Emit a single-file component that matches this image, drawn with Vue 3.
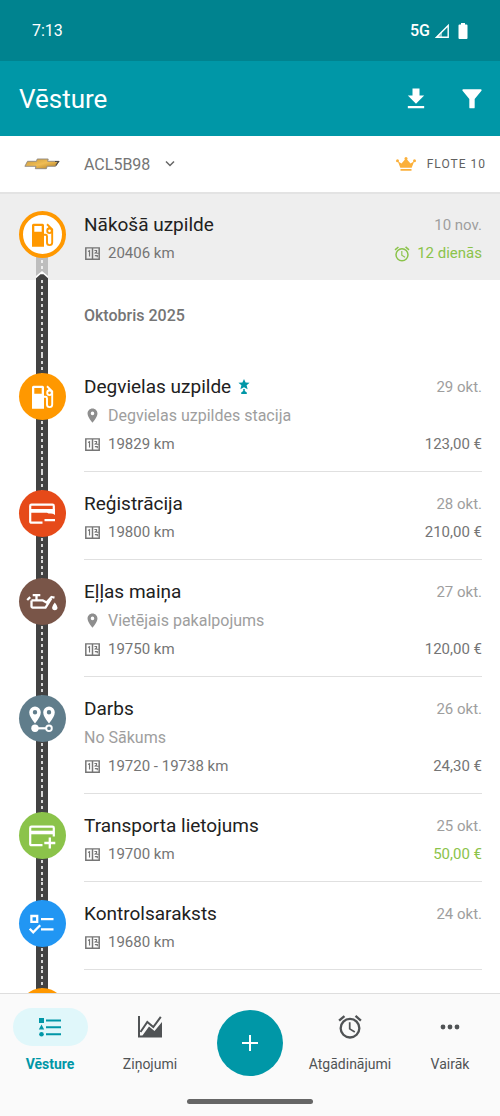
<script setup>
const upcoming = {
  title: 'Nākošā uzpilde',
  date: '10 nov.',
  odometer: '20406 km',
  due: '12 dienās',
}

const entries = [
  { icon: 'fuel', title: 'Degvielas uzpilde', starred: true, date: '29 okt.', place: 'Degvielas uzpildes stacija', odometer: '19829 km', amount: '123,00 €' },
  { icon: 'expense', title: 'Reģistrācija', date: '28 okt.', odometer: '19800 km', amount: '210,00 €' },
  { icon: 'oil', title: 'Eļļas maiņa', date: '27 okt.', place: 'Vietējais pakalpojums', odometer: '19750 km', amount: '120,00 €' },
  { icon: 'route', title: 'Darbs', date: '26 okt.', note: 'No Sākums', odometer: '19720 - 19738 km', amount: '24,30 €' },
  { icon: 'income', title: 'Transporta lietojums', date: '25 okt.', odometer: '19700 km', amount: '50,00 €', positive: true },
  { icon: 'checklist', title: 'Kontrolsaraksts', date: '24 okt.', odometer: '19680 km' },
  { icon: 'fuel' },
]
</script>

<template>
  <div class="app">
    <svg class="defs" width="0" height="0" aria-hidden="true">
      <defs>
        <symbol id="i-odo" viewBox="0 0 16 14">
          <path d="M1.700 1.700h12.600v10.600H1.700zM8 1.700v10.600" fill="none" stroke="currentColor" stroke-width="1.400" />
          <path d="M3.800 5.200l1.400-.8v5.400M9.800 4.200h2v1.300L10 7M14 6.800h-2.500M10.200 9h2.300v1.600" fill="none" stroke="currentColor" stroke-width="1.100" />
        </symbol>
        <symbol id="i-pin" viewBox="0 0 24 24">
          <path d="M12 2C8.100 2 5 5.100 5 9c0 5.300 7 13 7 13s7-7.700 7-13c0-3.900-3.100-7-7-7zm0 9.500a2.500 2.500 0 1 1 0-5 2.500 2.500 0 0 1 0 5z" fill="currentColor" />
        </symbol>
        <symbol id="i-alarm" viewBox="0 0 24 24">
          <path d="M22 5.700l-4.600-3.900-1.300 1.500 4.600 3.900L22 5.700zM7.900 3.400L6.600 1.900 2 5.700l1.300 1.500 4.600-3.800zM12.500 8H11v6l4.700 2.900.8-1.200-4-2.400V8zM12 4a9 9 0 1 0 0 18 9 9 0 0 0 0-18zm0 16a7 7 0 1 1 0-14 7 7 0 0 1 0 14z" fill="currentColor" />
        </symbol>
        <symbol id="i-pump" viewBox="0 0 28 28">
          <path fill-rule="evenodd" d="M5.500 2.700h9q1.500 0 1.500 1.500v21.500H4V4.200q0-1.500 1.500-1.500zM6.300 5v5.700h7.400V5z" fill="currentColor" />
          <path d="M16 13.800h1.500q1.500 0 1.500 1.500v6.200a2.600 2.600 0 0 0 5.200 0V8.300L19 3.300M19.200 8.300l2.300-1.500" fill="none" stroke="currentColor" stroke-width="1.900" />
          <circle cx="21.500" cy="9.800" r="2.300" fill="none" stroke="currentColor" stroke-width="1.900" />
        </symbol>
      </defs>
    </svg>

    <div class="status">
      <span class="clock">7:13</span>
      <span class="signals">
        <span>5G</span>
        <svg width="16" height="16" viewBox="0 0 16 16" aria-hidden="true">
          <path d="M14.200 2.500v11.700H2.500z" fill="none" stroke="#fff" stroke-width="1.400" />
          <path d="M1 15L8 8V15z" fill="#fff" opacity=".5" />
        </svg>
        <svg class="battery" width="10" height="16" viewBox="0 0 10 16" aria-hidden="true">
          <path d="M3 0h4v1.500h1.500q1 0 1 1V15q0 1-1 1h-7q-1 0-1-1V2.500q0-1 1-1H3z" fill="#fff" />
        </svg>
      </span>
    </div>

    <header class="appbar">
      <h1>Vēsture</h1>
      <button class="icon-btn" aria-label="Lejupielādēt">
        <svg width="28" height="28" viewBox="0 0 24 24"><path d="M5 20h14v-2H5zM19 9h-4V3H9v6H5l7 7z" fill="#fff" /></svg>
      </button>
      <button class="icon-btn" aria-label="Filtrēt">
        <svg width="28" height="28" viewBox="0 0 24 24"><path d="M4.500 3.600h15c.7 0 1 .8.600 1.300L14.300 12v7.200c0 .5-.3.800-.8.800h-3c-.5 0-.8-.3-.8-.8V12L3.900 4.900c-.4-.5-.1-1.300.6-1.300z" fill="#fff" /></svg>
      </button>
    </header>

    <div class="vehicle">
      <svg class="brand" width="36" height="12" viewBox="0 0 36 12" aria-hidden="true">
        <defs>
          <linearGradient id="gold" x1="0" y1="0" x2="1" y2="1">
            <stop offset="0" stop-color="#c99a3c" />
            <stop offset=".5" stop-color="#f0bd55" />
            <stop offset="1" stop-color="#a87722" />
          </linearGradient>
        </defs>
        <path d="M3.500 3.300h9l.7-2.300h11l-.6 2.300H35l-3.500 5h-8.300l-.8 2.400H11.300l.7-2.400H.9z" fill="url(#gold)" stroke="#8d8780" stroke-width=".9" />
        <path d="M31 3.500h3.500l-2.700 4" fill="none" stroke="#4d4a48" stroke-width="1.200" />
      </svg>
      <button class="plate">
        ACL5B98
        <svg width="12" height="8" viewBox="0 0 12 8" aria-hidden="true"><path d="M2 1.500l4 4 4-4" fill="none" stroke="#666" stroke-width="1.500" /></svg>
      </button>
      <a class="plan" href="#flote">
        <svg width="20" height="14" viewBox="0 0 20 14" aria-hidden="true">
          <path d="M1.800 4.200l3.700 2.300L9.400 2h1.200l3.900 4.500 3.700-2.300-2.500 6.600H4.300zM4.500 12h11v1.800h-11z" fill="#fbb03b" />
          <circle cx="10" cy="1.500" r="1.500" fill="#fbb03b" /><circle cx="1.500" cy="3.800" r="1.500" fill="#fbb03b" /><circle cx="18.500" cy="3.800" r="1.500" fill="#fbb03b" />
        </svg>
        FLOTE 10
      </a>
    </div>

    <main class="feed">
      <section class="row upcoming">
        <div class="rail">
          <span class="badge outlined">
            <svg width="28" height="28" aria-hidden="true"><use href="#i-pump" /></svg>
          </span>
          <svg class="road-tip" width="12" height="8" viewBox="0 0 12 8" aria-hidden="true">
            <path d="M0 8V4l6-5 6 5v4z" fill="#fff" /><path d="M0 8V6.300L4.500 2.300h3L12 6.300V8z" fill="#424242" />
          </svg>
        </div>
        <div class="body">
          <div class="line title"><h2>{{ upcoming.title }}</h2><time>{{ upcoming.date }}</time></div>
          <div class="line">
            <svg class="mini" width="17" height="15"><use href="#i-odo" /></svg>
            <span class="odo">{{ upcoming.odometer }}</span>
            <span class="due"><svg width="18" height="18"><use href="#i-alarm" /></svg>{{ upcoming.due }}</span>
          </div>
        </div>
      </section>

      <div class="row month"><div class="rail road"></div><h2>Oktobris 2025</h2></div>

      <article v-for="(e, i) in entries" :key="i" class="row">
        <div class="rail road">
          <span class="badge" :class="e.icon">
            <svg width="28" height="28" viewBox="0 0 28 28" aria-hidden="true">
              <use v-if="e.icon === 'fuel'" href="#i-pump" />
              <template v-else-if="e.icon === 'expense'">
                <path d="M14.500 22.700H3.500q-1.300 0-1.300-1.300V6q0-1.300 1.300-1.300h21q1.300 0 1.300 1.300v7.500" fill="none" stroke="#fff" stroke-width="2.200" />
                <path d="M2 9h25v6q-2-1.500-4.500-1.400-2 0-3.500-.9H2zM16.500 19h10.500v2.200H16.500z" fill="#fff" />
              </template>
              <template v-else-if="e.icon === 'income'">
                <path d="M14.500 23.200H3.500q-1.300 0-1.300-1.300V6q0-1.300 1.300-1.300h21q1.300 0 1.300 1.300v8.500" fill="none" stroke="#fff" stroke-width="2.200" />
                <path d="M2 8.700h24v3.600H2z" fill="#fff" />
                <path d="M21.800 15.500v11M16.300 21h11" stroke="#fff" stroke-width="2.300" />
              </template>
              <template v-else-if="e.icon === 'oil'">
                <path d="M3.500 12.300h11l4 2.200 5-5.500 3 .7M23.300 10.500L17.500 19.600H4.500q-1 0-1-1v-6M8.500 7.500v5M4.700 7.200h7.600M-.8 12l3-2.800" fill="none" stroke="#fff" stroke-width="2.300" stroke-linejoin="round" />
                <path d="M26.800 14.500q2.700 3.300 2.700 5a2.700 2.700 0 0 1-5.400 0q0-1.700 2.700-5z" fill="#fff" />
              </template>
              <template v-else-if="e.icon === 'route'">
                <path fill-rule="evenodd" d="M7 1.500a5.800 5.800 0 0 1 5.800 5.800Q12.800 11.500 7 18.500 1.200 11.500 1.200 7.300A5.800 5.800 0 0 1 7 1.500zm0 3.600a2.200 2.200 0 1 0 0 4.400 2.200 2.200 0 0 0 0-4.400zM21 1.500a5.800 5.800 0 0 1 5.800 5.800q0 4.200-5.800 11.200-5.800-7-5.800-11.200A5.800 5.800 0 0 1 21 1.500zm0 3.600a2.200 2.200 0 1 0 0 4.400 2.200 2.200 0 0 0 0-4.400z" fill="#fff" />
                <circle cx="7" cy="23.300" r="3.700" fill="#fff" />
                <circle cx="21" cy="23.300" r="2.800" fill="none" stroke="#fff" stroke-width="1.900" />
                <path d="M9 23.300h9.500" stroke="#fff" stroke-width="2.200" />
              </template>
              <template v-else>
                <path d="M3.400 6h5.800v5.800H3.400zM13 9.200h12.500M13 19.300h12.500M1.700 18.800l3.500 3.500 7-7" fill="none" stroke="#fff" stroke-width="2.300" />
              </template>
            </svg>
          </span>
        </div>
        <div v-if="e.title" class="body ruled">
          <div class="line title">
            <h2>{{ e.title }}</h2>
            <svg v-if="e.starred" class="star" width="12" height="16" viewBox="0 0 12 16" aria-hidden="true">
              <path d="M6 0l1.600 3.400 4 .3-3 2.600 1 3.900L6 8.200l-3.600 2 1-3.900-3-2.600 4-.3zM5.200 10h1.600v2l2 1.500V15H3.200v-1.500l2-1.500z" fill="#0097a7" />
            </svg>
            <time>{{ e.date }}</time>
          </div>
          <div v-if="e.place" class="line soft">
            <svg class="mini pin" width="17" height="17"><use href="#i-pin" /></svg>{{ e.place }}
          </div>
          <div v-if="e.note" class="line soft">{{ e.note }}</div>
          <div class="line last">
            <svg class="mini" width="17" height="15"><use href="#i-odo" /></svg>
            <span class="odo">{{ e.odometer }}</span>
            <span v-if="e.amount" class="amount" :class="{ positive: e.positive }">{{ e.amount }}</span>
          </div>
        </div>
      </article>
    </main>

    <footer class="bottom">
      <nav class="tabs">
        <a class="tab active" href="#vesture" aria-current="page">
          <span class="pill">
            <svg width="22" height="20" viewBox="0 0 22 20" aria-hidden="true">
              <path d="M0 1h5v5H0zM2.500 7.500l2.700 5h-5.400zM7 2.500h15v2H7zM7 9.300h15v2H7zM7 16.200h15v2H7z" fill="#0097a7" /><circle cx="2.500" cy="17.200" r="2.300" fill="#0097a7" />
            </svg>
          </span>
          Vēsture
        </a>
        <a class="tab" href="#zinojumi">
          <span class="pill">
            <svg width="24" height="22" viewBox="0 0 24 22" aria-hidden="true">
              <path d="M1 0v20.500h23" fill="none" stroke="#505355" stroke-width="2" />
              <path d="M4.500 19.500L11 10.500l5.500 4.500L24 6v15H4.500z" fill="#505355" />
              <path d="M2.500 16l6.800-10 6 5L22.800.8" fill="none" stroke="#505355" stroke-width="2" />
            </svg>
          </span>
          Ziņojumi
        </a>
        <button class="fab" aria-label="Pievienot">
          <svg width="18" height="18" viewBox="0 0 18 18"><path d="M9 1v16M1 9h16" stroke="#fff" stroke-width="2" /></svg>
        </button>
        <a class="tab" href="#atgadinajumi">
          <span class="pill"><svg width="28" height="28"><use href="#i-alarm" /></svg></span>
          Atgādinājumi
        </a>
        <a class="tab" href="#vairak">
          <span class="pill">
            <svg width="20" height="6" viewBox="0 0 20 6" aria-hidden="true"><circle cx="3" cy="3" r="2.400" fill="#505355" /><circle cx="10" cy="3" r="2.400" fill="#505355" /><circle cx="17" cy="3" r="2.400" fill="#505355" /></svg>
          </span>
          Vairāk
        </a>
      </nav>
      <div class="home-bar"></div>
    </footer>
  </div>
</template>

<style>
body { margin: 0; background: #fff; }
</style>

<style scoped>
.app {
  display: flex;
  flex-direction: column;
  height: 100vh;
  font-family: Roboto, "Liberation Sans", sans-serif;
  font-size: 15px;
  color: #757575;
  background: #fff;
}
.defs { position: absolute; }
h1, h2 { margin: 0; font-weight: 400; }
button { border: 0; padding: 0; background: none; font: inherit; color: inherit; cursor: pointer; }
a { color: inherit; text-decoration: none; }
svg { display: block; flex: none; overflow: visible; }

.status {
  flex: none;
  display: flex;
  align-items: center;
  justify-content: space-between;
  height: 61px;
  padding: 0 32px;
  background: #00838f;
  color: #fff;
  font-size: 16px;
}
.signals { display: flex; align-items: center; gap: 4px; font-weight: 500; }
.battery { margin-left: 4px; }

.appbar {
  flex: none;
  display: flex;
  align-items: center;
  gap: 28px;
  height: 75px;
  padding: 0 14px 0 19px;
  background: #0097a7;
  color: #fff;
}
.appbar h1 { flex: 1; font-size: 26px; line-height: 32px; }

.vehicle {
  flex: none;
  display: flex;
  align-items: center;
  height: 56px;
  padding: 0 14px 0 24px;
  border-bottom: 2px solid #e3e3e3;
}
.plate { display: flex; align-items: center; gap: 14px; margin-left: 24px; font-size: 16px; }
.plan {
  display: flex;
  align-items: center;
  gap: 11px;
  margin-left: auto;
  font-size: 12px;
  letter-spacing: 1px;
  color: #616161;
}

.feed { flex: 1; min-height: 0; overflow-y: auto; scrollbar-width: none; }
.row { display: flex; }
.rail {
  position: relative;
  flex: none;
  display: flex;
  justify-content: center;
  align-items: flex-start;
  width: 84px;
  padding-top: 18px;
  box-sizing: border-box;
}
.road {
  background:
    repeating-linear-gradient(#d6d6d6 0 3px, transparent 3px 6px) center / 2px 100% no-repeat,
    linear-gradient(#424242, #424242) center / 12px 100% no-repeat;
}
.badge {
  display: flex;
  align-items: center;
  justify-content: center;
  box-sizing: border-box;
  width: 47px;
  height: 47px;
  border-radius: 50%;
  color: #fff;
}
.badge.fuel { background: #ff9800; }
.badge.expense { background: #e64a19; }
.badge.oil { background: #795548; }
.badge.route { background: #607d8b; }
.badge.income { background: #8bc34a; }
.badge.checklist { background: #2196f3; }
.badge.outlined { background: #fff; border: 4px solid #ff9800; color: #ff9800; }

.upcoming { background: #eee; }
.upcoming .rail {
  padding-top: 17px;
  background:
    repeating-linear-gradient(#eee 0 3px, transparent 3px 6px) center / 2px 100% no-repeat,
    linear-gradient(transparent 50%, #bdbdbd 50%) center / 12px 100% no-repeat;
}
.road-tip { position: absolute; bottom: 0; left: 36px; }
.upcoming .body { padding-top: 17px; }

.month h2 { padding: 22px 0 25px; font-size: 16px; font-weight: 500; line-height: 28px; }

.body { flex: 1; min-width: 0; margin-right: 18px; padding: 18px 0 12px; }
.ruled { padding-bottom: 13px; border-bottom: 1px solid #e0e0e0; }
.line { display: flex; align-items: center; height: 29px; line-height: 29px; white-space: nowrap; }
.title { height: 28px; line-height: 28px; }
.last { height: 28px; line-height: 28px; }
.title h2 { font-size: 19px; color: #212121; }
.title time { margin-left: auto; color: #9e9e9e; }
.star { margin-left: 7px; }
.soft { font-size: 16px; color: #9e9e9e; }
.mini { margin-right: 7px; color: #757575; }
.pin { color: #8e8e8e; }
.amount, .due { margin-left: auto; }
.positive, .due { color: #8bc34a; }
.due { display: flex; align-items: center; gap: 6px; }

.bottom { flex: none; border-top: 1px solid #dedede; background: #fafafa; }
.tabs { display: grid; grid-template-columns: repeat(5, 1fr); padding-top: 14px; }
.tab {
  display: flex;
  flex-direction: column;
  align-items: center;
  gap: 8px;
  font-size: 14px;
  line-height: 20px;
  color: #505355;
}
.tab.active { color: #0097a7; font-weight: 700; }
.pill { display: flex; align-items: center; justify-content: center; width: 75px; height: 38px; border-radius: 19px; }
.active .pill { background: #e0f7fa; }
.fab {
  display: flex;
  align-items: center;
  justify-content: center;
  justify-self: center;
  width: 66px;
  height: 66px;
  margin-top: 2px;
  border-radius: 50%;
  background: #0097a7;
}
.home-bar { width: 126px; height: 5px; margin: 23px auto 12px; border-radius: 3px; background: #666; }
</style>
